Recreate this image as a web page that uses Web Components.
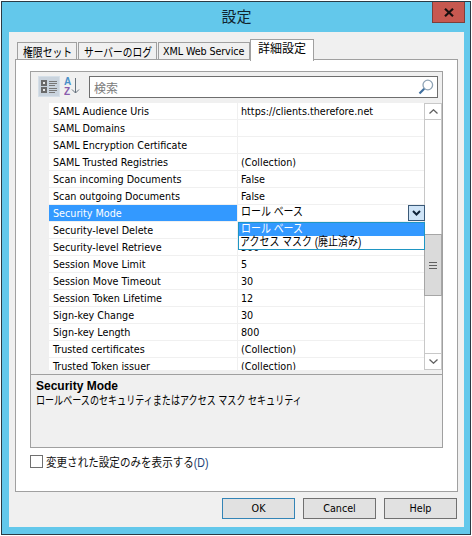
<!DOCTYPE html>
<html lang="ja">
<head>
<meta charset="utf-8">
<title>設定</title>
<style>
  html, body { margin: 0; padding: 0; background: #fff; }
  body { font: 10.7px "DejaVu Sans Condensed", "Noto Sans CJK JP", sans-serif; color: #000; }
</style>
</head>
<body>
<settings-dialog>
  <tab-strip></tab-strip>
  <prop-grid></prop-grid>
</settings-dialog>

<script>
const FONT = `"DejaVu Sans Condensed", "Noto Sans CJK JP", sans-serif`;

// the kana in the reference is much narrower than Noto CJK, so squeeze it
class NarrowText extends HTMLElement {
  constructor() {
    super();
    this.attachShadow({ mode: 'open' });
    this.shadowRoot.innerHTML = `
    <style>
      :host { display: inline-block; font: 12px "Liberation Sans", "Noto Sans CJK JP", sans-serif; white-space: nowrap; transform-origin: 0 50%; text-align: left; }
    </style><slot></slot>`;
  }
  connectedCallback() {
    this.style.width = this.getAttribute('w') + 'px';
    this.style.transform = 'scaleX(' + this.getAttribute('s') + ')';
  }
}

class SettingsDialog extends HTMLElement {
  constructor() {
    super();
    this.attachShadow({ mode: 'open' });
    this.shadowRoot.innerHTML = `
    <style>
      :host { display: block; width: 470px; height: 534px; margin: 1px 0 0 1px; box-sizing: border-box;
        border: 1px solid #2b3a44; background: #63c8eb; padding: 0 6px 7px 7px; font-family: ${FONT}; }
      .wrap { display: flex; flex-direction: column; height: 100%; }
      .title { height: 30px; flex: none; display: grid; grid-template-columns: 1fr auto 1fr; }
      .title h1 { margin: 0; font-weight: normal; font-size: 15px; line-height: 30px; color: #10242e; }
      .close { grid-column: 3; justify-self: end; margin-right: -1px; width: 33px; height: 21px; box-sizing: border-box;
        background: #c75850; border: 1px solid #7d3f3a; border-top: 0; display: flex; align-items: center; justify-content: center; }
      .inner { flex: 1; background: #f0f0f0; padding: 7px 6px 0; display: flex; flex-direction: column; }
      .page { height: 433px; box-sizing: border-box; border: 1px solid #a0a0a0; background: #fff; padding: 11px 14px 0; margin-top: -1px; }
      .check { display: flex; align-items: center; gap: 3px; margin-top: 6px; height: 14px; color: #111; }
      .box { width: 13px; height: 13px; box-sizing: border-box; border: 1px solid #707070; background: #fff; }
      .check u { text-decoration: none; color: #1d3f77; }
      .btns { display: flex; justify-content: flex-end; gap: 8px; margin-top: 6px; margin-right: 1px; }
    </style>
    <div class="wrap">
      <div class="title"><span></span><h1>設定</h1>
        <div class="close"><svg width="10" height="9" viewBox="0 0 10 9"><path d="M1 .8 9 8.2M9 .8 1 8.2" stroke="#1a1010" stroke-width="2.200"/></svg></div>
      </div>
      <div class="inner">
        <slot name="tabs"></slot>
        <div class="page">
          <slot></slot>
          <div class="check"><span class="box"></span><narrow-text w="163" s="0.88">変更された設定のみを表示する<u>(D)</u></narrow-text></div>
        </div>
        <div class="btns">
          <dlg-button primary>OK</dlg-button>
          <dlg-button>Cancel</dlg-button>
          <dlg-button>Help</dlg-button>
        </div>
      </div>
    </div>`;
  }
  connectedCallback() {
    this.querySelector('tab-strip').slot = 'tabs';
  }
}

class TabStrip extends HTMLElement {
  constructor() {
    super();
    this.attachShadow({ mode: 'open' });
    this.shadowRoot.innerHTML = `
    <style>
      :host { display: flex; align-items: flex-end; height: 21px; padding-left: 2px; position: relative; z-index: 1; }
      .tab { height: 18px; box-sizing: border-box; border: 1px solid #a0a0a0; background: #f0f0f0; margin-right: 1px;
        line-height: 17px; white-space: nowrap; color: #000; display: flex; padding-left: 5px; overflow: hidden; }
      .tab.on { height: 22px; background: #fff; border-bottom: 0; margin: 0 0 -1px -1px; line-height: 19px; padding-left: 7px; font-size: 12px; }
      .xml { padding-left: 4px; letter-spacing: -.1px; }
    </style>
    <div class="tab" style="width:60px"><narrow-text w="49" s="0.82">権限セット</narrow-text></div>
    <div class="tab" style="width:79px"><narrow-text w="68" s="0.81">サーバーのログ</narrow-text></div>
    <div class="tab xml" style="width:92px">XML Web Service</div>
    <div class="tab on" style="width:64px">詳細設定</div>`;
  }
}

class DlgButton extends HTMLElement {
  constructor() {
    super();
    this.attachShadow({ mode: 'open' });
    this.shadowRoot.innerHTML = `
    <style>
      :host { display: block; width: 73px; height: 21px; box-sizing: border-box; border: 1px solid #707070; background: #e1e1e1;
        text-align: center; line-height: 19px; color: #000; }
      :host([primary]) { border-color: #3384b6; }
    </style><slot></slot>`;
  }
}

class PropRow extends HTMLElement {
  constructor() {
    super();
    this.attachShadow({ mode: 'open' });
    this.shadowRoot.innerHTML = `
    <style>
      :host { display: grid; grid-template-columns: 189px 1fr; height: 17px; box-sizing: border-box; line-height: 18px;
        border-bottom: 1px solid #f0f0f0; color: #000; white-space: nowrap; }
      .k { padding-left: 4px; border-right: 1px solid #f0f0f0; overflow: hidden; }
      .v { padding-left: 3px; overflow: hidden; }
      :host([selected]) .k { background: #3399ff; color: #fff; }
    </style>
    <div class="k"><slot name="k"></slot></div>
    <div class="v"><slot></slot></div>`;
  }
  set label(t) { const s = document.createElement('span'); s.slot = 'k'; s.textContent = t; this.appendChild(s); }
}

const ROWS = [
  ['SAML Audience Uris', 'https://clients.therefore.net'],
  ['SAML Domains', ''],
  ['SAML Encryption Certificate', ''],
  ['SAML Trusted Registries', '(Collection)'],
  ['Scan incoming Documents', 'False'],
  ['Scan outgoing Documents', 'False'],
  ['Security Mode', ''],
  ['Security-level Delete', ''],
  ['Security-level Retrieve', '500'],
  ['Session Move Limit', '5'],
  ['Session Move Timeout', '30'],
  ['Session Token Lifetime', '12'],
  ['Sign-key Change', '30'],
  ['Sign-key Length', '800'],
  ['Trusted certificates', '(Collection)'],
  ['Trusted Token issuer', '(Collection)'],
];

class PropGrid extends HTMLElement {
  constructor() {
    super();
    this.attachShadow({ mode: 'open' });
    this.shadowRoot.innerHTML = `
    <style>
      :host { display: flex; flex-direction: column; width: 413px; height: 377px; box-sizing: border-box; border: 1px solid #a0a0a0;
        background: #f0f0f0; position: relative; }
      .tools { height: 31px; flex: none; display: flex; align-items: flex-start; padding: 4px 4px 0 7px; box-sizing: border-box; }
      .cat { width: 22px; height: 21px; box-sizing: border-box; background: #c9d3dd; border: 1px solid #d5dfe8; display: flex; align-items: center; justify-content: center; }
      .az { width: 16px; height: 21px; margin: 0 9px 0 4px; }
      .search { flex: 1; height: 22px; box-sizing: border-box; border: 1px solid #6e6e6e; background: #fff; display: flex; align-items: center;
        justify-content: space-between; padding: 0 3px 0 4px; color: #7a7a7a; font-size: 12px; }
      .body { height: 267px; flex: none; display: flex; overflow: hidden; }
      .rows { flex: 1; padding-left: 18px; }
      .list { background: #fff; }
      .sb { width: 18px; flex: none; box-sizing: border-box; background: #fff; border: 1px solid #c8c8c8; border-width: 0 1px; display: flex; flex-direction: column; }
      .sb i { display: flex; align-items: center; justify-content: center; height: 17px; flex: none; box-sizing: border-box; border: 1px solid #c8c8c8; margin: 0 -1px; background: #fff; }
      .track { height: 233px; }
      .thumb { margin: 114px -1px 0; height: 62px; box-sizing: border-box; background: #dadada; border: 1px solid #a6a6a6; display: flex; align-items: center; justify-content: center; }
      .desc { flex: 1; border-top: 1px solid #a0a0a0; margin-top: 4px; padding: 4px 5px; line-height: 15px; color: #000; }
      .desc b { display: block; font: bold 12px "Liberation Sans", sans-serif; line-height: 15px; }
      .desc narrow-text { line-height: 15px; display: block; }
      .editor { position: absolute; left: 207px; top: 133px; width: 187px; height: 16px; background: #fff; display: flex; align-items: flex-start; justify-content: space-between; padding-left: 3px; box-sizing: border-box; color: #000; }
      .editor narrow-text { line-height: 14px; }
      .drop { width: 17px; height: 16px; flex: none; box-sizing: border-box; background: #cfe4f7; border: 1px solid #3b5a78; display: flex; align-items: center; justify-content: center; }
      .menu { position: absolute; left: 207px; top: 150px; width: 187px; box-sizing: border-box; border: 1px solid #1f96c3; background: #fff; height: 28px; color: #000; }
      .menu div { height: 13px; padding-left: 1px; white-space: nowrap; }
      .menu narrow-text { display: block; line-height: 13px; }
      .menu .hot { background: #3399ff; color: #fff; padding-left: 2px; }
    </style>
    <div class="tools">
      <div class="cat"><svg width="16" height="13" viewBox="0 0 16 13" shape-rendering="crispEdges">
        <path fill="#6a6a6a" d="M0 0h6v6H0zM0 7h6v6H0z"/><path fill="#e8e8e8" d="M2 2h2v2H2zM2 9h2v2H2z"/>
        <path fill="#777" d="M8 1h8v1H8zM8 3h8v1H8zM8 5h6v1H8zM8 8h8v1H8zM8 10h8v1H8zM8 12h6v1H8z"/></svg></div>
      <div class="az"><svg width="16" height="21" viewBox="0 0 16 21">
        <text x="0" y="9" font-family="Liberation Sans" font-weight="bold" font-size="10" fill="#4a8fc9">A</text>
        <text x="0" y="19" font-family="Liberation Sans" font-weight="bold" font-size="10" fill="#8a5cad">Z</text>
        <path d="M11.500 2v15M8 13.500l3.500 3.500 3.500-3.500" fill="none" stroke="#66727d" stroke-width="1"/></svg></div>
      <div class="search"><span>検索</span>
        <svg width="16" height="16" viewBox="0 0 16 16"><circle cx="9.800" cy="6" r="4.800" fill="#fff" stroke="#8fa3b5" stroke-width="1.300"/>
        <path d="M6.200 9.800 1.500 14.500" stroke="#3f6f9f" stroke-width="2.200"/></svg></div>
    </div>
    <div class="body">
      <div class="rows"><div class="list" id="list"></div></div>
      <div class="sb">
        <i><svg width="9" height="5" viewBox="0 0 9 5"><path d="M.5 4.500 4.500 .8l4 3.700" fill="none" stroke="#606060" stroke-width="1.300"/></svg></i>
        <div class="track"><div class="thumb"><svg width="8" height="7" shape-rendering="crispEdges"><path fill="#606060" d="M0 0h8v1H0zM0 3h8v1H0zM0 6h8v1H0z"/></svg></div></div>
        <i><svg width="9" height="5" viewBox="0 0 9 5"><path d="M.5 .5l4 3.700 4-3.700" fill="none" stroke="#606060" stroke-width="1.300"/></svg></i>
      </div>
    </div>
    <div class="desc"><b>Security Mode</b><narrow-text w="265" s="0.755">ロールベースのセキュリティまたはアクセス マスク セキュリティ</narrow-text></div>
    <div class="editor"><narrow-text w="62" s="0.83">ロール ベース</narrow-text>
      <div class="drop"><svg width="9" height="6" viewBox="0 0 9 6"><path d="M1 1l3.500 3.500L8 1" fill="none" stroke="#10243a" stroke-width="2"/></svg></div></div>
    <div class="menu"><div class="hot"><narrow-text w="62" s="0.83">ロール ベース</narrow-text></div><div><narrow-text w="121" s="0.83">アクセス マスク (廃止済み)</narrow-text></div></div>`;
    const list = this.shadowRoot.getElementById('list');
    ROWS.forEach(([k, v], i) => {
      const r = document.createElement('prop-row');
      r.textContent = v;
      r.label = k;
      if (i == 6) r.setAttribute('selected', '');
      list.appendChild(r);
    });
  }
}

customElements.define('narrow-text', NarrowText);
customElements.define('dlg-button', DlgButton);
customElements.define('prop-row', PropRow);
customElements.define('tab-strip', TabStrip);
customElements.define('prop-grid', PropGrid);
customElements.define('settings-dialog', SettingsDialog);
</script>
</body>
</html>
